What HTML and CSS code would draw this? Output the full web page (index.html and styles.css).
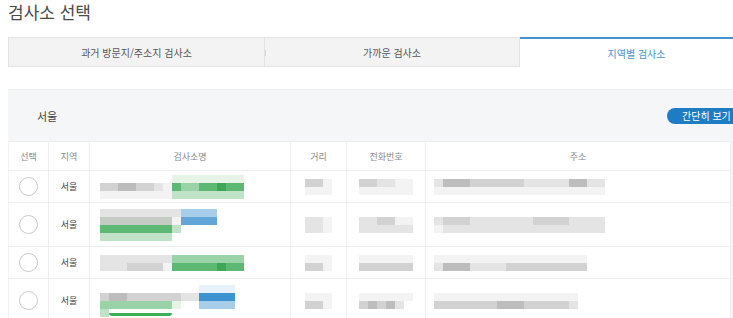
FILE: index.html
```html
<!DOCTYPE html>
<html lang="ko">
<head>
  <meta charset="UTF-8" />
  <title>검사소 선택</title>
  <link rel="stylesheet" href="styles.css">
</head>
<body>
  <div class="page">
    <h1 class="title">검사소 선택</h1>

    <div class="tabs">
      <div class="tab">과거 방문지/주소지 검사소</div>
      <div class="tab tab-mid">가까운 검사소</div>
      <div class="tab active">지역별 검사소</div>
    </div>

    <div class="panel">
      <div class="panel-head">
        <span class="region">서울</span>
        <button class="btn-simple">간단히 보기</button>
      </div>

      <table class="list">
        <colgroup>
          <col class="col-sel">
          <col class="col-area">
          <col class="col-name">
          <col class="col-dist">
          <col class="col-tel">
          <col class="col-addr">
        </colgroup>
        <thead>
          <tr>
            <th>선택</th>
            <th>지역</th>
            <th>검사소명</th>
            <th>거리</th>
            <th>전화번호</th>
            <th>주소</th>
          </tr>
        </thead>
        <tbody>
          <tr class="row-s">
            <td><span class="radio"></span></td>
            <td>서울</td>
            <td class="name">
              <div class="mz">
                <div class="ln"><i class="w c8"></i><i class="gn0 c8"></i></div>
                <div class="ln"><i class="g2 c2"></i><i class="g3 c2"></i><i class="g2 c2"></i><i class="g1 c1"></i><i class="g0 c1"></i><i class="gn3 c1"></i><i class="gn2 c2"></i><i class="gn3 c2"></i><i class="gn4 c1"></i><i class="gn3 c2"></i></div>
                <div class="ln"><i class="g0 c8"></i><i class="gn1 c8"></i></div>
              </div>
            </td>
            <td>
              <div class="mz">
                <div class="ln"><i class="g2 c2"></i><i class="g0 c1"></i></div>
                <div class="ln"><i class="g0 c3"></i></div>
              </div>
            </td>
            <td>
              <div class="mz">
                <div class="ln"><i class="g2 c2"></i><i class="g1 c2"></i><i class="g0 c2"></i></div>
                <div class="ln"><i class="g0 c6"></i></div>
              </div>
            </td>
            <td class="addr">
              <div class="mz">
                <div class="ln"><i class="g1 c1"></i><i class="g3 c3"></i><i class="g2 c6"></i><i class="g1 c5"></i><i class="g3 c2"></i><i class="g1 c2"></i></div>
                <div class="ln"><i class="g0 c19"></i></div>
              </div>
            </td>
          </tr>

          <tr class="row-l">
            <td><span class="radio"></span></td>
            <td>서울</td>
            <td class="name">
              <div class="mz">
                <div class="ln"><i class="g1 c9"></i><i class="b1 c4"></i></div>
                <div class="ln"><i class="gg c8"></i><i class="g0 c1"></i><i class="b2 c4"></i></div>
                <div class="ln"><i class="gn3 c8"></i><i class="gn1 c1"></i></div>
                <div class="ln"><i class="gn1 c8"></i></div>
              </div>
            </td>
            <td>
              <div class="mz">
                <div class="ln"><i class="g1 c2"></i><i class="g0 c1"></i></div>
                <div class="ln"><i class="g1 c2"></i><i class="g0 c1"></i></div>
              </div>
            </td>
            <td>
              <div class="mz">
                <div class="ln"><i class="g1 c2"></i><i class="g2 c2"></i><i class="g0 c2"></i></div>
                <div class="ln"><i class="g1 c6"></i></div>
              </div>
            </td>
            <td class="addr">
              <div class="mz">
                <div class="ln"><i class="g1 c1"></i><i class="g2 c3"></i><i class="g1 c7"></i><i class="g2 c4"></i><i class="g1 c4"></i></div>
                <div class="ln"><i class="g0 c1"></i><i class="g1 c18"></i></div>
              </div>
            </td>
          </tr>

          <tr class="row-s">
            <td><span class="radio"></span></td>
            <td>서울</td>
            <td class="name">
              <div class="mz">
                <div class="ln"><i class="g1 c8"></i><i class="gn2 c8"></i></div>
                <div class="ln"><i class="g1 c3"></i><i class="g2 c4"></i><i class="g0 c1"></i><i class="gn3 c5"></i><i class="gn4 c1"></i><i class="gn3 c2"></i></div>
              </div>
            </td>
            <td>
              <div class="mz">
                <div class="ln"><i class="g0 c3"></i></div>
                <div class="ln"><i class="g2 c2"></i><i class="g0 c1"></i></div>
              </div>
            </td>
            <td>
              <div class="mz">
                <div class="ln"><i class="g0 c6"></i></div>
                <div class="ln"><i class="g2 c6"></i></div>
              </div>
            </td>
            <td class="addr">
              <div class="mz">
                <div class="ln"><i class="g0 c17"></i></div>
                <div class="ln"><i class="g1 c1"></i><i class="g3 c3"></i><i class="g1 c4"></i><i class="g2 c6"></i><i class="g2 c3"></i></div>
              </div>
            </td>
          </tr>

          <tr class="row-l">
            <td><span class="radio"></span></td>
            <td>서울</td>
            <td class="name">
              <div class="mz">
                <div class="ln"><i class="w c11"></i><i class="b0 c4"></i></div>
                <div class="ln"><i class="g2 c1"></i><i class="g3 c2"></i><i class="g2 c6"></i><i class="g1 c2"></i><i class="b3 c4"></i></div>
                <div class="ln"><i class="gn2 c8"></i><i class="gn0 c1"></i><i class="w c2"></i><i class="b1 c4"></i></div>
                <div class="ln"><i class="gn1 c1"></i><i class="under c7"></i></div>
              </div>
            </td>
            <td>
              <div class="mz">
                <div class="ln"><i class="g0 c3"></i></div>
                <div class="ln"><i class="g2 c2"></i><i class="g0 c1"></i></div>
              </div>
            </td>
            <td>
              <div class="mz">
                <div class="ln"><i class="g0 c6"></i></div>
                <div class="ln"><i class="g2 c1"></i><i class="g3 c1"></i><i class="g2 c1"></i><i class="g3 c1"></i><i class="g1 c1"></i></div>
              </div>
            </td>
            <td class="addr">
              <div class="mz">
                <div class="ln"><i class="g0 c16"></i></div>
                <div class="ln"><i class="g2 c7"></i><i class="g3 c3"></i><i class="g2 c5"></i><i class="g1 c1"></i></div>
              </div>
            </td>
          </tr>
        </tbody>
      </table>
    </div>
  </div>
</body>
</html>
```

FILE: styles.css
```css
html, body {
  margin: 0;
  overflow: hidden;
}

body {
  font-family: "Noto Sans CJK KR", "Noto Sans", sans-serif;
  background: #fff;
  color: #333;
}

.page {
  width: 745px;
  padding-left: 8px;
}

.title {
  margin: 0;
  font-size: 17px;
  font-weight: 400;
  line-height: 24px;
  color: #4a4a4a;
}

.tabs {
  display: flex;
  margin-top: 13px;
  height: 30px;
}

.tab {
  flex: 0 0 257px;
  display: flex;
  align-items: center;
  justify-content: center;
  font-size: 10px;
  color: #555;
  background: #f3f3f3;
  border: 1px solid #e2e2e2;
  box-sizing: border-box;
}

.tab-mid {
  flex-basis: 255px;
  border-left: none;
  position: relative;
}

.tab-mid::before {
  content: "";
  position: absolute;
  left: 0;
  top: 12px;
  width: 1px;
  height: 6px;
  background: #d8d8d8;
}

.tab.active {
  flex: 1;
  background: #fff;
  border: none;
  border-top: 2px solid #4a92cf;
  color: #4a92cf;
}

.panel {
  margin-top: 22px;
  background: #f4f6f8;
  border-top: 1px solid #eceef0;
}

.panel-head {
  height: 51px;
  display: flex;
  align-items: center;
  justify-content: space-between;
  padding-left: 29px;
}

.region {
  font-size: 11px;
  color: #444;
}

.btn-simple {
  height: 16px;
  width: 82px;
  margin-right: 4px;
  padding: 0 0 0 15px;
  border: none;
  border-radius: 8px;
  background: #1e7dc2;
  color: #fff;
  font-family: inherit;
  font-size: 10px;
  text-align: left;
  line-height: 16px;
}

.list {
  width: 722px;
  border-collapse: collapse;
  background: #fff;
  table-layout: fixed;
}

.list th, .list td {
  border: 1px solid #eeeeee;
  font-size: 9px;
  color: #444;
  text-align: center;
  vertical-align: middle;
  padding: 0;
  overflow: hidden;
}

.list th {
  height: 28px;
  font-weight: 400;
  color: #888;
}

.list tr > :first-child { border-left-color: #f3f3f3; }

.col-sel { width: 40px; }
.col-area { width: 41px; }
.col-name { width: 201px; }
.col-dist { width: 56px; }
.col-tel { width: 79px; }
.col-addr { width: 305px; }

.row-s td { height: 31px; }
.row-l td { height: 43px; }

.radio {
  display: inline-block;
  width: 17px;
  height: 17px;
  border: 1px solid #c9c9c9;
  border-radius: 50%;
  vertical-align: middle;
}

.list td.name { text-align: left; padding-left: 10px; }
.list td.addr { text-align: left; padding-left: 8px; }

.mz { display: inline-flex; flex-direction: column; vertical-align: middle; }
.ln { display: flex; height: 8px; }
.ln i { display: block; height: 8px; }

.c1 { width: 9px; }
.c2 { width: 18px; }
.c3 { width: 27px; }
.c4 { width: 36px; }
.c5 { width: 45px; }
.c6 { width: 54px; }
.c7 { width: 63px; }
.c8 { width: 72px; }
.c9 { width: 81px; }
.c11 { width: 99px; }
.c16 { width: 144px; }
.c17 { width: 153px; }
.c18 { width: 162px; }
.c19 { width: 171px; }

.w { background: transparent; }
.g0 { background: #f3f3f3; }
.g1 { background: #e4e4e4; }
.g2 { background: #d2d2d2; }
.g3 { background: #bdbdbd; }
.gg { background: #c3cbc3; }
.gn0 { background: #e6f4e8; }
.gn1 { background: #c0e3c7; }
.gn2 { background: #9bd3a8; }
.gn3 { background: #5cb873; }
.gn4 { background: #3da657; }
.b0 { background: #e7f1fa; }
.b1 { background: #a7cde9; }
.b2 { background: #62a6d9; }
.b3 { background: #3d93d1; }
.under {
  height: 3px !important;
  margin-top: 4px;
  background: #3fae5c;
  border-radius: 0 0 6px 6px;
}
```
